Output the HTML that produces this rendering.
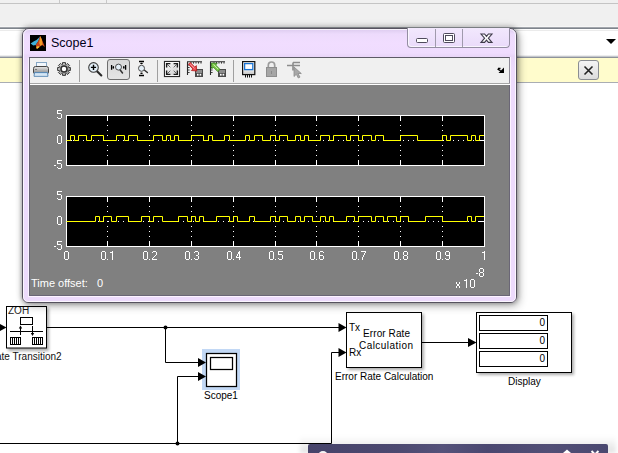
<!DOCTYPE html>
<html><head><meta charset="utf-8">
<style>
*{margin:0;padding:0;box-sizing:border-box}
html,body{width:618px;height:453px;overflow:hidden;background:#fff;font-family:"Liberation Sans",sans-serif}
.a{position:absolute}
.t{position:absolute;white-space:nowrap;color:#fff;font-size:12px;line-height:14px;will-change:transform}
.d{position:absolute;white-space:nowrap;color:#000;font-size:10px;line-height:12px}
</style></head><body>
<div class="a" style="left:0;top:0;width:618px;height:453px;overflow:hidden">
<!-- top chrome of simulink -->
<div class="a" style="left:0;top:0;width:618px;height:3px;background:#f0f0f0"></div>
<div class="a" style="left:59px;top:0;width:1px;height:3px;background:#c8c8c8"></div>
<div class="a" style="left:106px;top:0;width:1px;height:3px;background:#c8c8c8"></div>
<div class="a" style="left:0;top:3px;width:618px;height:1px;background:#c4c4c4"></div>
<div class="a" style="left:0;top:4px;width:618px;height:23px;background:#f0f0f0"></div>
<div class="a" style="left:0;top:26px;width:618px;height:1px;background:#f6f6f6"></div>
<div class="a" style="left:0;top:27px;width:618px;height:1px;background:#a2a6ac"></div>
<div class="a" style="left:0;top:28px;width:618px;height:1px;background:#7e848c"></div>
<div class="a" style="left:0;top:29px;width:618px;height:28px;background:#fff"></div>
<div class="a" style="left:0;top:30px;width:618px;height:1px;background:#ebebeb"></div>
<div class="a" style="left:0;top:55px;width:618px;height:1px;background:#ededed"></div><div class="a" style="left:0;top:56px;width:618px;height:1px;background:#c4c7cc"></div>
<div class="a" style="left:0;top:57px;width:618px;height:1px;background:#8e939b"></div>
<div class="a" style="left:0;top:58px;width:618px;height:24px;background:#fffccc"></div>
<div class="a" style="left:0;top:82px;width:618px;height:1px;background:#a9adb3"></div>
<!-- dropdown triangle -->
<svg class="a" style="left:601px;top:36px" width="16" height="10"><path d="M5 3h10l-5 5z" fill="#000"/></svg>
<!-- close button in yellow bar -->
<div class="a" style="left:578px;top:60px;width:21px;height:20px;border:1px solid #8a8d92;border-radius:3px;background:linear-gradient(#f4f4f4,#dcdcdc)"></div>
<svg class="a" style="left:578px;top:60px" width="21" height="20"><path d="M6.5 6.5l8 8M14.5 6.5l-8 8" stroke="#222" stroke-width="1.6"/></svg>

<!-- simulink diagram -->
<svg class="a" style="left:0;top:0" width="618" height="453">
 <defs>
  <filter id="sh" x="-20%" y="-20%" width="150%" height="150%"><feGaussianBlur stdDeviation="1.6"/></filter>
 </defs>
 <rect x="8" y="308" width="41" height="43" fill="#777" opacity="0.6" filter="url(#sh)"/>
 <rect x="348" y="314" width="76" height="56" fill="#777" opacity="0.6" filter="url(#sh)"/>
 <rect x="478" y="314" width="96" height="61" fill="#777" opacity="0.6" filter="url(#sh)"/>
 <rect x="6.5" y="306.5" width="40" height="41.5" fill="#fff" stroke="#000"/>
 <path d="M46 327.5H340" stroke="#000" fill="none"/>
 <path d="M165.5 327V362.5H199" stroke="#000" fill="none"/>
 <path d="M177.5 443.5V376.5H199" stroke="#000" fill="none"/>
 <path d="M0 443.5H331.5V352.5H340" stroke="#000" fill="none"/>
 <path d="M422 342.5H469" stroke="#000" fill="none"/>
 <circle cx="165.5" cy="327.5" r="2" fill="#000"/>
 <circle cx="177.5" cy="443.5" r="2" fill="#000"/>
 <rect x="202" y="349" width="38" height="41" fill="#c2d8f5"/>
 <rect x="206.5" y="353.5" width="30" height="33" fill="#fff" stroke="#000" stroke-width="1.25"/>
 <rect x="210.5" y="357.5" width="22" height="12" fill="#fff" stroke="#000" stroke-width="1.25"/>
 <rect x="346.5" y="312.5" width="75" height="55" fill="#fff" stroke="#000"/>
 <rect x="476.5" y="312.5" width="95" height="60" fill="#fff" stroke="#000"/>
 <rect x="479.5" y="315.5" width="68" height="15" fill="#fff" stroke="#000"/>
 <rect x="479.5" y="333.5" width="68" height="15" fill="#fff" stroke="#000"/>
 <rect x="479.5" y="351.5" width="68" height="15" fill="#fff" stroke="#000"/>
 <path d="M338.5 323L346.5 327.5L338.5 332z M338.5 348L346.5 352.5L338.5 357z M198 358L206 362.5L198 367z M198 372L206 376.5L198 381z M468 338L476.5 342.5L468 347z M-2 323L6.5 327.5L-2 332z" fill="#000"/>
 <rect x="20.5" y="317.5" width="12" height="7" fill="none" stroke="#000"/>
 <path d="M10 331.5H43 M20.5 327V335 M32.5 326V334" stroke="#000"/>
 <path d="M18.8 328.5L20.5 325.5L22.2 328.5z M30.8 333L32.5 336L34.2 333z" fill="#000"/>
 <rect x="10.5" y="337.5" width="10" height="7" fill="none" stroke="#000"/>
 <rect x="32.5" y="337.5" width="10" height="7" fill="none" stroke="#000"/>
 <path d="M12.5 338v6M14.5 338v6M16.5 338v6M18.5 338v6M34.5 338v6M36.5 338v6M38.5 338v6M40.5 338v6" stroke="#000"/>
</svg>
<div class="a" style="left:7px;top:307px;width:39px;height:10px;overflow:hidden"><div class="d" style="left:1px;top:-2px;color:#222">ZOH</div></div>
<div class="d" style="left:-4px;top:351px;color:#111">ate Transition2</div>
<div class="d" style="left:204px;top:390px">Scope1</div>
<div class="d" style="left:349px;top:322px">Tx</div>
<div class="d" style="left:349px;top:347px">Rx</div>
<div class="d" style="left:363px;top:328px;letter-spacing:0.1px">Error Rate</div><div class="d" style="left:359px;top:340px;letter-spacing:0.45px">Calculation</div>
<div class="d" style="left:335px;top:371px">Error Rate Calculation</div>
<div class="d" style="left:508px;top:376px">Display</div>
<div class="d" style="left:480px;top:317px;width:65px;text-align:right">0</div>
<div class="d" style="left:480px;top:335px;width:65px;text-align:right">0</div>
<div class="d" style="left:480px;top:353px;width:65px;text-align:right">0</div>

<!-- bottom dark window -->
<div class="a" style="left:300px;top:436px;width:316px;height:17px;background:linear-gradient(rgba(0,0,0,0),rgba(0,0,0,0.12));filter:blur(2px)"></div>
<div class="a" style="left:308px;top:444px;width:300px;height:9px;background:linear-gradient(90deg,#46436a 0%,#4c4970 30%,#55527a 45%,#4a4770 60%,#524f76 80%,#4a4870 100%);border-radius:2px 2px 0 0"></div>
<div class="a" style="left:318px;top:451px;width:10px;height:10px;border-radius:50%;background:#f4f4f4"></div>
<svg class="a" style="left:555px;top:444px" width="50" height="9"><path d="M8 9L12 5.5L16 9z" fill="#fff"/><path d="M36.5 7l7 7M43.5 7l-7 7" stroke="#fff" stroke-width="2"/></svg>

<!-- SCOPE WINDOW -->
<div class="a" style="left:22px;top:28px;width:495px;height:275px;border:1px solid #56525f;border-radius:7px 7px 6px 6px;background:linear-gradient(180deg,#dccbee 0px,#eddbfc 5px,#f1ddff 14px,#efdcfe 24px,#e9d6f8 27px,#eddbfc 40px,#eddbfc 100%);box-shadow:0 0 4px rgba(0,0,0,0.28),2px 3px 9px rgba(0,0,0,0.3),0 -2px 7px rgba(0,0,0,0.14)"></div>
<div class="a" style="left:23px;top:29px;width:493px;height:273px;border:1px solid rgba(255,255,255,0.75);border-radius:6px 6px 5px 5px"></div>
<!-- icon -->
<svg class="a" style="left:30px;top:35px" width="16" height="16" viewBox="0 0 16 16">
 <rect width="16" height="16" fill="#000"/>
 <path d="M0.6 8.6L4 6.3L6.5 5L8.9 2.8L10.3 1.1L8.5 6L5.7 10.1L3.3 10.6z" fill="#3fb0dc"/>
 <path d="M5.7 10.1L8 6.5L10.3 1.1L12.5 6L14.9 12L12 10.1L9.5 12L6.9 14L6.2 12z" fill="#c8461a"/>
 <path d="M10.3 1.1L11.8 4.5L12.6 9.6L10.4 11L9.2 8z" fill="#f29a26"/>
 <path d="M6.9 14L6.2 12L8.2 11L9.5 12z" fill="#f7c531"/>
</svg>
<div class="a" style="left:51px;top:35px;font-size:12.5px;color:#000018;line-height:16px;white-space:nowrap">Scope1</div>
<!-- caption buttons -->
<div class="a" style="left:407px;top:28px;width:103px;height:20px;border:1px solid #948ea2;border-top:none;border-radius:0 0 4px 4px;background:linear-gradient(#f2e8fd,#eadbfa);box-shadow:inset 1px -1px 0 rgba(255,255,255,0.7)"></div>
<div class="a" style="left:435px;top:29px;width:1px;height:18px;background:#a09aac"></div>
<div class="a" style="left:462px;top:29px;width:1px;height:18px;background:#a09aac"></div>
<svg class="a" style="left:408px;top:28px" width="102" height="20">
 <rect x="8.5" y="10.5" width="11" height="4" rx="1" fill="#fff" stroke="#4f4b5c"/>
 <rect x="35.5" y="5.5" width="11" height="9" rx="1" fill="#fff" stroke="#4f4b5c"/>
 <rect x="37.5" y="7.5" width="7" height="5" fill="#fff" stroke="#4f4b5c"/>
 <path d="M73 6h3.6l1.9 2.3l1.9-2.3h3.6l-3.6 4.2l3.6 4.2h-3.6l-1.9-2.3l-1.9 2.3h-3.6l3.6-4.2z" fill="#fafafa" stroke="#3e3a4a" stroke-width="1.1"/>
</svg>

<!-- toolbar -->
<div class="a" style="left:29px;top:57px;width:481px;height:28px;background:#f0f0f0;border-top:1px solid #5d5a66;border-left:1px solid #6a6676;border-right:1px solid #8e8a98"></div>
<div class="a" style="left:30px;top:83px;width:480px;height:1px;background:#a6a6a6"></div>
<div class="a" style="left:30px;top:84px;width:480px;height:1px;background:#fff"></div>
<div class="a" style="left:28px;top:58px;width:1px;height:238px;background:rgba(255,255,255,0.6)"></div>
<div class="a" style="left:79px;top:60px;width:1px;height:22px;background:#a0a0a0"></div>
<div class="a" style="left:157px;top:60px;width:1px;height:22px;background:#a0a0a0"></div>
<div class="a" style="left:233px;top:60px;width:1px;height:22px;background:#a0a0a0"></div>
<div class="a" style="left:107px;top:59px;width:23px;height:21px;border:1px solid #6e6e6e;border-radius:3px;background:linear-gradient(#d8d8d8,#e4e4e4)"></div>
<svg class="a" style="left:29px;top:57px" width="481" height="28">
 <defs>
  <linearGradient id="gbody" x1="0" y1="0" x2="0" y2="1"><stop offset="0" stop-color="#e8e8e8"/><stop offset="0.5" stop-color="#b4b4b4"/><stop offset="1" stop-color="#8a8a8a"/></linearGradient>
  <linearGradient id="gtray" x1="0" y1="0" x2="0" y2="1"><stop offset="0" stop-color="#b8d4ec"/><stop offset="1" stop-color="#eef5fb"/></linearGradient>
  <linearGradient id="gbox" x1="0" y1="0" x2="1" y2="1"><stop offset="0" stop-color="#fff"/><stop offset="1" stop-color="#c8c8c8"/></linearGradient>
  <linearGradient id="ggear" x1="0" y1="0" x2="1" y2="1"><stop offset="0" stop-color="#d0d0d0"/><stop offset="1" stop-color="#8c8c8c"/></linearGradient>
 </defs>
 <!-- printer -->
 <rect x="7.5" y="5.5" width="10" height="5" fill="#f2f7fc" stroke="#86a6c4"/>
 <rect x="4.5" y="9.5" width="15" height="7.5" rx="2" fill="url(#gbody)" stroke="#454545"/>
 <path d="M6.5 12.5h1" stroke="#333"/>
 <path d="M5.5 15.5h13l0.5 3.8h-14z" fill="url(#gtray)" stroke="#5b8ab5"/>
 <!-- gear -->
 <g transform="translate(35,12)">
  <path d="M-1.50 -4.66 L-1.50 -6.40 L1.50 -6.40 L1.50 -4.66 L2.24 -4.36 L3.46 -5.59 L5.59 -3.46 L4.36 -2.24 L4.66 -1.50 L6.40 -1.50 L6.40 1.50 L4.66 1.50 L4.36 2.24 L5.59 3.46 L3.46 5.59 L2.24 4.36 L1.50 4.66 L1.50 6.40 L-1.50 6.40 L-1.50 4.66 L-2.24 4.36 L-3.46 5.59 L-5.59 3.46 L-4.36 2.24 L-4.66 1.50 L-6.40 1.50 L-6.40 -1.50 L-4.66 -1.50 L-4.36 -2.24 L-5.59 -3.46 L-3.46 -5.59 L-2.24 -4.36z" fill="url(#ggear)" stroke="#3a3a3a" stroke-width="1"/>
  <circle r="3" fill="#fff" stroke="#2e2e2e" stroke-width="1.5"/>
  
 </g>
 <!-- zoom in -->
 <path d="M68.3 14.5L72.3 18.5" stroke="#2a2a2a" stroke-width="2.1" stroke-linecap="round"/>
 <circle cx="64.5" cy="10.4" r="4.8" fill="#e2eef7" stroke="#3a3a3a" stroke-width="1.05"/>
 <path d="M61.9 10.4h5.2M64.5 7.8v5.2" stroke="#000" stroke-width="1.4"/>
 <!-- zoom x -->
 <path d="M82.6 8v4.8 M96.6 8v4.8" stroke="#000" stroke-width="1.3"/>
 <ellipse cx="84.3" cy="10.4" rx="0.75" ry="1.3" fill="#000"/>
 <ellipse cx="94.8" cy="10.4" rx="0.75" ry="1.3" fill="#000"/>
 <path d="M91 12.8L93.5 16" stroke="#333" stroke-width="1.5" stroke-linecap="round"/>
 <circle cx="89.5" cy="10.1" r="3" fill="#e4eff8" stroke="#4a4a4a" stroke-width="1"/>
 <!-- zoom y -->
 <path d="M110 4.5h5 M110 18.5h5" stroke="#000" stroke-width="1.3"/>
 <ellipse cx="112.5" cy="6.4" rx="1.3" ry="0.75" fill="#000"/>
 <ellipse cx="112.5" cy="16.3" rx="1.3" ry="0.75" fill="#000"/>
 <path d="M115.2 13L118.4 15.5" stroke="#333" stroke-width="1.5" stroke-linecap="round"/>
 <circle cx="112.5" cy="11.3" r="3" fill="#e4eff8" stroke="#4a4a4a" stroke-width="1"/>
 <!-- autoscale -->
 <g transform="translate(135,4)">
  <rect x="0.5" y="0.5" width="15" height="15" fill="url(#gbox)" stroke="#2a2a2a" stroke-width="1.2"/>
  <rect x="1.5" y="1.5" width="13" height="13" fill="none" stroke="#fff" stroke-width="0.8"/>
  <path d="M2.6 6.4V2.6H6.4 M13.4 6.4V2.6H9.6 M2.6 9.6V13.4H6.4 M13.4 9.6V13.4H9.6" stroke="#1a1a1a" stroke-width="1.4" fill="none"/>
  <path d="M3 3l3.3 3.3 M13 3l-3.3 3.3 M3 13l3.3-3.3 M13 13l-3.3-3.3" stroke="#444" stroke-width="0.8"/>
 </g>
 <!-- save axes limits -->
 <g transform="translate(158,4)">
  <path d="M0.5 1V14 M0 0.8H15" stroke="#2a2a2a" stroke-width="1.1"/>
  <path d="M4 1v1.6 M6.5 1v1.6 M9 1v1.6 M11.5 1v1.6 M14 1v1.6 M1 4h1.6 M1 6.5h1.6 M1 9h1.6 M1 11.5h1.6" stroke="#2a2a2a" stroke-width="0.9"/>
  <rect x="8.5" y="8.5" width="7" height="7" fill="#8c8c8c" stroke="#4a4a4a"/>
  <rect x="9" y="12" width="6" height="3" fill="#4a4a4a"/>
  <rect x="10" y="12.8" width="1.6" height="1.8" fill="#fff"/><rect x="12.6" y="12.8" width="1.6" height="1.8" fill="#fff"/>
  <path d="M1.5 3.2L3.2 1.5L7.8 6.1L9.3 4.6L9.8 10L4.4 9.5L5.9 8z" fill="#ec4a50" stroke="#b01818" stroke-width="0.8"/>
  <path d="M3.2 3L7.5 7.3" stroke="#f8b0b4" stroke-width="1"/>
 </g>
 <!-- restore axes limits -->
 <g transform="translate(181,4)">
  <path d="M0.5 1V14 M0 0.8H15" stroke="#2a2a2a" stroke-width="1.1"/>
  <path d="M4 1v1.6 M6.5 1v1.6 M9 1v1.6 M11.5 1v1.6 M14 1v1.6 M1 4h1.6 M1 6.5h1.6 M1 9h1.6 M1 11.5h1.6" stroke="#2a2a2a" stroke-width="0.9"/>
  <rect x="8.5" y="8.5" width="7" height="7" fill="#8c8c8c" stroke="#4a4a4a"/>
  <rect x="9" y="12" width="6" height="3" fill="#4a4a4a"/>
  <rect x="10" y="12.8" width="1.6" height="1.8" fill="#fff"/><rect x="12.6" y="12.8" width="1.6" height="1.8" fill="#fff"/>
  <path d="M1.5 2L7.2 2.4L5.6 4L10 8.4L7.8 10.6L3.4 6.2L1.9 7.7z" fill="#7cc84a" stroke="#2f7d12" stroke-width="0.8"/>
  <path d="M3.5 3.5L8 8" stroke="#c8f0a0" stroke-width="1"/>
 </g>
 <!-- scope params -->
 <g transform="translate(213,4)">
  <defs><linearGradient id="gsp" x1="0" y1="0" x2="0" y2="1"><stop offset="0.5" stop-color="#fafafa"/><stop offset="1" stop-color="#c4c4c4"/></linearGradient></defs>
  <rect x="0.6" y="0.6" width="12.2" height="13" fill="url(#gsp)" stroke="#111" stroke-width="1.2"/>
  <rect x="2.6" y="2.6" width="8.2" height="6" fill="#fff" stroke="#1a74d4" stroke-width="1.3"/>
  <path d="M3.5 14v2.5M5.5 14v2.5M7.5 14v2.5M9.5 14v2.5" stroke="#111"/>
 </g>
 <!-- lock -->
 <g transform="translate(237,4)">
  <path d="M2.3 6.5V4.2a3.2 3.2 0 0 1 6.4 0V6.5" fill="none" stroke="#9c9c9c" stroke-width="1.7"/>
  <rect x="0.5" y="6.5" width="10" height="9" fill="#a6a6a6" stroke="#8e8e8e"/>
  <path d="M5.5 10v3" stroke="#8a8a8a"/>
 </g>
 <!-- cursor -->
 <g transform="translate(258,4)">
  <path d="M0 4.5h9 M6 1.5h7 M6 1.5v8 M9 4.5h4" stroke="#8c8c8c" stroke-width="1.6"/>
  <path d="M7 6v9.5l2.3-2.2l2 3.7l1.7-0.9l-2-3.6h3.3z" fill="#a8a8a8" stroke="#8a8a8a" stroke-width="0.8"/>
 </g>
 <!-- expand arrow -->
 <path d="M475 10.5V16H469.5z" fill="#000"/><path d="M468.5 12L474 15.5M469 11.5h2.5" stroke="#000" stroke-width="1.3" fill="none"/>
</svg>

<!-- plot area -->
<div class="a" style="left:29px;top:85px;width:481px;height:211px;background:#808080;border-left:1px solid #6a6676;border-bottom:1px solid #6a6676;border-right:1px solid #6a6676"></div><div class="a" style="left:510px;top:57px;width:1px;height:239px;background:rgba(255,250,255,0.8)"></div><div class="a" style="left:28px;top:296px;width:483px;height:1px;background:rgba(255,250,255,0.8)"></div>
<svg class="a" style="left:0;top:0" width="618" height="453">
<rect x="66" y="115" width="419" height="51" fill="#fff"/>
<rect x="67" y="116" width="417" height="49" fill="#000"/>
<path d="M68 140h1v1h-1z M73 140h1v1h-1z M78 140h1v1h-1z M83 140h1v1h-1z M88 140h1v1h-1z M93 140h1v1h-1z M98 140h1v1h-1z M103 140h1v1h-1z M108 140h1v1h-1z M113 140h1v1h-1z M118 140h1v1h-1z M123 140h1v1h-1z M128 140h1v1h-1z M133 140h1v1h-1z M138 140h1v1h-1z M143 140h1v1h-1z M148 140h1v1h-1z M153 140h1v1h-1z M158 140h1v1h-1z M163 140h1v1h-1z M168 140h1v1h-1z M173 140h1v1h-1z M178 140h1v1h-1z M183 140h1v1h-1z M188 140h1v1h-1z M193 140h1v1h-1z M198 140h1v1h-1z M203 140h1v1h-1z M208 140h1v1h-1z M213 140h1v1h-1z M218 140h1v1h-1z M223 140h1v1h-1z M228 140h1v1h-1z M233 140h1v1h-1z M238 140h1v1h-1z M243 140h1v1h-1z M248 140h1v1h-1z M253 140h1v1h-1z M258 140h1v1h-1z M263 140h1v1h-1z M268 140h1v1h-1z M273 140h1v1h-1z M278 140h1v1h-1z M283 140h1v1h-1z M288 140h1v1h-1z M293 140h1v1h-1z M298 140h1v1h-1z M303 140h1v1h-1z M308 140h1v1h-1z M313 140h1v1h-1z M318 140h1v1h-1z M323 140h1v1h-1z M328 140h1v1h-1z M333 140h1v1h-1z M338 140h1v1h-1z M343 140h1v1h-1z M348 140h1v1h-1z M353 140h1v1h-1z M358 140h1v1h-1z M363 140h1v1h-1z M368 140h1v1h-1z M373 140h1v1h-1z M378 140h1v1h-1z M383 140h1v1h-1z M388 140h1v1h-1z M393 140h1v1h-1z M398 140h1v1h-1z M403 140h1v1h-1z M408 140h1v1h-1z M413 140h1v1h-1z M418 140h1v1h-1z M423 140h1v1h-1z M428 140h1v1h-1z M433 140h1v1h-1z M438 140h1v1h-1z M443 140h1v1h-1z M448 140h1v1h-1z M453 140h1v1h-1z M458 140h1v1h-1z M463 140h1v1h-1z M468 140h1v1h-1z M473 140h1v1h-1z M478 140h1v1h-1z M67 140h5v1h-5z M479 140h5v1h-5z M107 116h1v5h-1z M107 160h1v5h-1z M107 125h1v1h-1z M107 130h1v1h-1z M107 135h1v1h-1z M107 140h1v1h-1z M107 145h1v1h-1z M107 150h1v1h-1z M107 155h1v1h-1z M149 116h1v5h-1z M149 160h1v5h-1z M149 125h1v1h-1z M149 130h1v1h-1z M149 135h1v1h-1z M149 140h1v1h-1z M149 145h1v1h-1z M149 150h1v1h-1z M149 155h1v1h-1z M191 116h1v5h-1z M191 160h1v5h-1z M191 125h1v1h-1z M191 130h1v1h-1z M191 135h1v1h-1z M191 140h1v1h-1z M191 145h1v1h-1z M191 150h1v1h-1z M191 155h1v1h-1z M233 116h1v5h-1z M233 160h1v5h-1z M233 125h1v1h-1z M233 130h1v1h-1z M233 135h1v1h-1z M233 140h1v1h-1z M233 145h1v1h-1z M233 150h1v1h-1z M233 155h1v1h-1z M275 116h1v5h-1z M275 160h1v5h-1z M275 125h1v1h-1z M275 130h1v1h-1z M275 135h1v1h-1z M275 140h1v1h-1z M275 145h1v1h-1z M275 150h1v1h-1z M275 155h1v1h-1z M316 116h1v5h-1z M316 160h1v5h-1z M316 125h1v1h-1z M316 130h1v1h-1z M316 135h1v1h-1z M316 140h1v1h-1z M316 145h1v1h-1z M316 150h1v1h-1z M316 155h1v1h-1z M358 116h1v5h-1z M358 160h1v5h-1z M358 125h1v1h-1z M358 130h1v1h-1z M358 135h1v1h-1z M358 140h1v1h-1z M358 145h1v1h-1z M358 150h1v1h-1z M358 155h1v1h-1z M400 116h1v5h-1z M400 160h1v5h-1z M400 125h1v1h-1z M400 130h1v1h-1z M400 135h1v1h-1z M400 140h1v1h-1z M400 145h1v1h-1z M400 150h1v1h-1z M400 155h1v1h-1z M442 116h1v5h-1z M442 160h1v5h-1z M442 125h1v1h-1z M442 130h1v1h-1z M442 135h1v1h-1z M442 140h1v1h-1z M442 145h1v1h-1z M442 150h1v1h-1z M442 155h1v1h-1z" fill="#fff"/>
<path d="M66.5 140.5 H70.5 V135.5 H74.5 V140.5 H78.5 V135.5 H86.5 V140.5 H91.5 V135.5 H103.5 V140.5 H116.5 V135.5 H124.5 V140.5 H128.5 V135.5 H137.5 V140.5 H153.5 V135.5 H162.5 V140.5 H166.5 V135.5 H170.5 V140.5 H174.5 V135.5 H178.5 V140.5 H191.5 V135.5 H203.5 V140.5 H208.5 V135.5 H212.5 V140.5 H224.5 V135.5 H229.5 V140.5 H245.5 V135.5 H249.5 V140.5 H254.5 V135.5 H262.5 V140.5 H270.5 V135.5 H275.5 V140.5 H279.5 V135.5 H287.5 V140.5 H295.5 V135.5 H300.5 V140.5 H304.5 V135.5 H308.5 V140.5 H320.5 V135.5 H329.5 V140.5 H333.5 V135.5 H346.5 V140.5 H350.5 V135.5 H358.5 V140.5 H362.5 V135.5 H371.5 V140.5 H375.5 V135.5 H383.5 V140.5 H400.5 V135.5 H417.5 V140.5 H442.5 V135.5 H446.5 V140.5 H450.5 V135.5 H467.5 V140.5 H471.5 V135.5 H475.5 V140.5 H479.5 V135.5 H484" fill="none" stroke="#ff0" stroke-width="1"/>
<rect x="66" y="196" width="419" height="51" fill="#fff"/>
<rect x="67" y="197" width="417" height="49" fill="#000"/>
<path d="M68 221h1v1h-1z M73 221h1v1h-1z M78 221h1v1h-1z M83 221h1v1h-1z M88 221h1v1h-1z M93 221h1v1h-1z M98 221h1v1h-1z M103 221h1v1h-1z M108 221h1v1h-1z M113 221h1v1h-1z M118 221h1v1h-1z M123 221h1v1h-1z M128 221h1v1h-1z M133 221h1v1h-1z M138 221h1v1h-1z M143 221h1v1h-1z M148 221h1v1h-1z M153 221h1v1h-1z M158 221h1v1h-1z M163 221h1v1h-1z M168 221h1v1h-1z M173 221h1v1h-1z M178 221h1v1h-1z M183 221h1v1h-1z M188 221h1v1h-1z M193 221h1v1h-1z M198 221h1v1h-1z M203 221h1v1h-1z M208 221h1v1h-1z M213 221h1v1h-1z M218 221h1v1h-1z M223 221h1v1h-1z M228 221h1v1h-1z M233 221h1v1h-1z M238 221h1v1h-1z M243 221h1v1h-1z M248 221h1v1h-1z M253 221h1v1h-1z M258 221h1v1h-1z M263 221h1v1h-1z M268 221h1v1h-1z M273 221h1v1h-1z M278 221h1v1h-1z M283 221h1v1h-1z M288 221h1v1h-1z M293 221h1v1h-1z M298 221h1v1h-1z M303 221h1v1h-1z M308 221h1v1h-1z M313 221h1v1h-1z M318 221h1v1h-1z M323 221h1v1h-1z M328 221h1v1h-1z M333 221h1v1h-1z M338 221h1v1h-1z M343 221h1v1h-1z M348 221h1v1h-1z M353 221h1v1h-1z M358 221h1v1h-1z M363 221h1v1h-1z M368 221h1v1h-1z M373 221h1v1h-1z M378 221h1v1h-1z M383 221h1v1h-1z M388 221h1v1h-1z M393 221h1v1h-1z M398 221h1v1h-1z M403 221h1v1h-1z M408 221h1v1h-1z M413 221h1v1h-1z M418 221h1v1h-1z M423 221h1v1h-1z M428 221h1v1h-1z M433 221h1v1h-1z M438 221h1v1h-1z M443 221h1v1h-1z M448 221h1v1h-1z M453 221h1v1h-1z M458 221h1v1h-1z M463 221h1v1h-1z M468 221h1v1h-1z M473 221h1v1h-1z M478 221h1v1h-1z M67 221h5v1h-5z M479 221h5v1h-5z M107 197h1v5h-1z M107 241h1v5h-1z M107 206h1v1h-1z M107 211h1v1h-1z M107 216h1v1h-1z M107 221h1v1h-1z M107 226h1v1h-1z M107 231h1v1h-1z M107 236h1v1h-1z M149 197h1v5h-1z M149 241h1v5h-1z M149 206h1v1h-1z M149 211h1v1h-1z M149 216h1v1h-1z M149 221h1v1h-1z M149 226h1v1h-1z M149 231h1v1h-1z M149 236h1v1h-1z M191 197h1v5h-1z M191 241h1v5h-1z M191 206h1v1h-1z M191 211h1v1h-1z M191 216h1v1h-1z M191 221h1v1h-1z M191 226h1v1h-1z M191 231h1v1h-1z M191 236h1v1h-1z M233 197h1v5h-1z M233 241h1v5h-1z M233 206h1v1h-1z M233 211h1v1h-1z M233 216h1v1h-1z M233 221h1v1h-1z M233 226h1v1h-1z M233 231h1v1h-1z M233 236h1v1h-1z M275 197h1v5h-1z M275 241h1v5h-1z M275 206h1v1h-1z M275 211h1v1h-1z M275 216h1v1h-1z M275 221h1v1h-1z M275 226h1v1h-1z M275 231h1v1h-1z M275 236h1v1h-1z M316 197h1v5h-1z M316 241h1v5h-1z M316 206h1v1h-1z M316 211h1v1h-1z M316 216h1v1h-1z M316 221h1v1h-1z M316 226h1v1h-1z M316 231h1v1h-1z M316 236h1v1h-1z M358 197h1v5h-1z M358 241h1v5h-1z M358 206h1v1h-1z M358 211h1v1h-1z M358 216h1v1h-1z M358 221h1v1h-1z M358 226h1v1h-1z M358 231h1v1h-1z M358 236h1v1h-1z M400 197h1v5h-1z M400 241h1v5h-1z M400 206h1v1h-1z M400 211h1v1h-1z M400 216h1v1h-1z M400 221h1v1h-1z M400 226h1v1h-1z M400 231h1v1h-1z M400 236h1v1h-1z M442 197h1v5h-1z M442 241h1v5h-1z M442 206h1v1h-1z M442 211h1v1h-1z M442 216h1v1h-1z M442 221h1v1h-1z M442 226h1v1h-1z M442 231h1v1h-1z M442 236h1v1h-1z" fill="#fff"/>
<path d="M66.5 221.5 H95.5 V216.5 H99.5 V221.5 H103.5 V216.5 H111.5 V221.5 H116.5 V216.5 H128.5 V221.5 H141.5 V216.5 H149.5 V221.5 H153.5 V216.5 H162.5 V221.5 H178.5 V216.5 H187.5 V221.5 H191.5 V216.5 H195.5 V221.5 H199.5 V216.5 H203.5 V221.5 H216.5 V216.5 H229.5 V221.5 H233.5 V216.5 H237.5 V221.5 H249.5 V216.5 H254.5 V221.5 H270.5 V216.5 H275.5 V221.5 H279.5 V216.5 H287.5 V221.5 H295.5 V216.5 H300.5 V221.5 H304.5 V216.5 H312.5 V221.5 H320.5 V216.5 H325.5 V221.5 H329.5 V216.5 H333.5 V221.5 H346.5 V216.5 H354.5 V221.5 H358.5 V216.5 H371.5 V221.5 H375.5 V216.5 H383.5 V221.5 H387.5 V216.5 H396.5 V221.5 H400.5 V216.5 H408.5 V221.5 H425.5 V216.5 H442.5 V221.5 H467.5 V216.5 H471.5 V221.5 H475.5 V216.5 H484" fill="none" stroke="#ff0" stroke-width="1"/>
</svg>
<svg class="a" style="left:0;top:0" width="618" height="453" shape-rendering="crispEdges"><path d="M65 251h3v1h-3z M64 252h1v1h-1z M68 252h1v1h-1z M64 253h1v1h-1z M68 253h1v1h-1z M64 254h1v1h-1z M68 254h1v1h-1z M64 255h1v1h-1z M68 255h1v1h-1z M64 256h1v1h-1z M68 256h1v1h-1z M64 257h1v1h-1z M68 257h1v1h-1z M64 258h1v1h-1z M68 258h1v1h-1z M65 259h3v1h-3z M102 251h3v1h-3z M101 252h1v1h-1z M105 252h1v1h-1z M101 253h1v1h-1z M105 253h1v1h-1z M101 254h1v1h-1z M105 254h1v1h-1z M101 255h1v1h-1z M105 255h1v1h-1z M101 256h1v1h-1z M105 256h1v1h-1z M101 257h1v1h-1z M105 257h1v1h-1z M101 258h1v1h-1z M105 258h1v1h-1z M102 259h3v1h-3z M107 259h1v1h-1z M112 251h1v1h-1z M110 252h3v1h-3z M112 253h1v1h-1z M112 254h1v1h-1z M112 255h1v1h-1z M112 256h1v1h-1z M112 257h1v1h-1z M112 258h1v1h-1z M112 259h1v1h-1z M144 251h3v1h-3z M143 252h1v1h-1z M147 252h1v1h-1z M143 253h1v1h-1z M147 253h1v1h-1z M143 254h1v1h-1z M147 254h1v1h-1z M143 255h1v1h-1z M147 255h1v1h-1z M143 256h1v1h-1z M147 256h1v1h-1z M143 257h1v1h-1z M147 257h1v1h-1z M143 258h1v1h-1z M147 258h1v1h-1z M144 259h3v1h-3z M149 259h1v1h-1z M153 251h3v1h-3z M152 252h1v1h-1z M156 252h1v1h-1z M156 253h1v1h-1z M156 254h1v1h-1z M155 255h1v1h-1z M154 256h1v1h-1z M153 257h1v1h-1z M152 258h1v1h-1z M152 259h5v1h-5z M186 251h3v1h-3z M185 252h1v1h-1z M189 252h1v1h-1z M185 253h1v1h-1z M189 253h1v1h-1z M185 254h1v1h-1z M189 254h1v1h-1z M185 255h1v1h-1z M189 255h1v1h-1z M185 256h1v1h-1z M189 256h1v1h-1z M185 257h1v1h-1z M189 257h1v1h-1z M185 258h1v1h-1z M189 258h1v1h-1z M186 259h3v1h-3z M191 259h1v1h-1z M195 251h3v1h-3z M194 252h1v1h-1z M198 252h1v1h-1z M198 253h1v1h-1z M198 254h1v1h-1z M196 255h2v1h-2z M198 256h1v1h-1z M198 257h1v1h-1z M194 258h1v1h-1z M198 258h1v1h-1z M195 259h3v1h-3z M228 251h3v1h-3z M227 252h1v1h-1z M231 252h1v1h-1z M227 253h1v1h-1z M231 253h1v1h-1z M227 254h1v1h-1z M231 254h1v1h-1z M227 255h1v1h-1z M231 255h1v1h-1z M227 256h1v1h-1z M231 256h1v1h-1z M227 257h1v1h-1z M231 257h1v1h-1z M227 258h1v1h-1z M231 258h1v1h-1z M228 259h3v1h-3z M233 259h1v1h-1z M239 251h1v1h-1z M238 252h2v1h-2z M238 253h2v1h-2z M237 254h1v1h-1z M239 254h1v1h-1z M237 255h1v1h-1z M239 255h1v1h-1z M236 256h1v1h-1z M239 256h1v1h-1z M236 257h5v1h-5z M239 258h1v1h-1z M239 259h1v1h-1z M270 251h3v1h-3z M269 252h1v1h-1z M273 252h1v1h-1z M269 253h1v1h-1z M273 253h1v1h-1z M269 254h1v1h-1z M273 254h1v1h-1z M269 255h1v1h-1z M273 255h1v1h-1z M269 256h1v1h-1z M273 256h1v1h-1z M269 257h1v1h-1z M273 257h1v1h-1z M269 258h1v1h-1z M273 258h1v1h-1z M270 259h3v1h-3z M275 259h1v1h-1z M278 251h5v1h-5z M278 252h1v1h-1z M278 253h1v1h-1z M278 254h4v1h-4z M282 255h1v1h-1z M282 256h1v1h-1z M282 257h1v1h-1z M278 258h1v1h-1z M282 258h1v1h-1z M279 259h3v1h-3z M311 251h3v1h-3z M310 252h1v1h-1z M314 252h1v1h-1z M310 253h1v1h-1z M314 253h1v1h-1z M310 254h1v1h-1z M314 254h1v1h-1z M310 255h1v1h-1z M314 255h1v1h-1z M310 256h1v1h-1z M314 256h1v1h-1z M310 257h1v1h-1z M314 257h1v1h-1z M310 258h1v1h-1z M314 258h1v1h-1z M311 259h3v1h-3z M316 259h1v1h-1z M320 251h3v1h-3z M319 252h1v1h-1z M323 252h1v1h-1z M319 253h1v1h-1z M319 254h1v1h-1z M319 255h4v1h-4z M319 256h1v1h-1z M323 256h1v1h-1z M319 257h1v1h-1z M323 257h1v1h-1z M319 258h1v1h-1z M323 258h1v1h-1z M320 259h3v1h-3z M353 251h3v1h-3z M352 252h1v1h-1z M356 252h1v1h-1z M352 253h1v1h-1z M356 253h1v1h-1z M352 254h1v1h-1z M356 254h1v1h-1z M352 255h1v1h-1z M356 255h1v1h-1z M352 256h1v1h-1z M356 256h1v1h-1z M352 257h1v1h-1z M356 257h1v1h-1z M352 258h1v1h-1z M356 258h1v1h-1z M353 259h3v1h-3z M358 259h1v1h-1z M361 251h5v1h-5z M365 252h1v1h-1z M364 253h1v1h-1z M364 254h1v1h-1z M363 255h1v1h-1z M363 256h1v1h-1z M362 257h1v1h-1z M362 258h1v1h-1z M362 259h1v1h-1z M395 251h3v1h-3z M394 252h1v1h-1z M398 252h1v1h-1z M394 253h1v1h-1z M398 253h1v1h-1z M394 254h1v1h-1z M398 254h1v1h-1z M394 255h1v1h-1z M398 255h1v1h-1z M394 256h1v1h-1z M398 256h1v1h-1z M394 257h1v1h-1z M398 257h1v1h-1z M394 258h1v1h-1z M398 258h1v1h-1z M395 259h3v1h-3z M400 259h1v1h-1z M404 251h3v1h-3z M403 252h1v1h-1z M407 252h1v1h-1z M403 253h1v1h-1z M407 253h1v1h-1z M403 254h1v1h-1z M407 254h1v1h-1z M404 255h3v1h-3z M403 256h1v1h-1z M407 256h1v1h-1z M403 257h1v1h-1z M407 257h1v1h-1z M403 258h1v1h-1z M407 258h1v1h-1z M404 259h3v1h-3z M437 251h3v1h-3z M436 252h1v1h-1z M440 252h1v1h-1z M436 253h1v1h-1z M440 253h1v1h-1z M436 254h1v1h-1z M440 254h1v1h-1z M436 255h1v1h-1z M440 255h1v1h-1z M436 256h1v1h-1z M440 256h1v1h-1z M436 257h1v1h-1z M440 257h1v1h-1z M436 258h1v1h-1z M440 258h1v1h-1z M437 259h3v1h-3z M442 259h1v1h-1z M446 251h3v1h-3z M445 252h1v1h-1z M449 252h1v1h-1z M445 253h1v1h-1z M449 253h1v1h-1z M445 254h1v1h-1z M449 254h1v1h-1z M446 255h4v1h-4z M449 256h1v1h-1z M449 257h1v1h-1z M445 258h1v1h-1z M449 258h1v1h-1z M446 259h3v1h-3z M484 251h1v1h-1z M482 252h3v1h-3z M484 253h1v1h-1z M484 254h1v1h-1z M484 255h1v1h-1z M484 256h1v1h-1z M484 257h1v1h-1z M484 258h1v1h-1z M484 259h1v1h-1z M57 110h5v1h-5z M57 111h1v1h-1z M57 112h1v1h-1z M57 113h4v1h-4z M61 114h1v1h-1z M61 115h1v1h-1z M61 116h1v1h-1z M57 117h1v1h-1z M61 117h1v1h-1z M58 118h3v1h-3z M58 135h3v1h-3z M57 136h1v1h-1z M61 136h1v1h-1z M57 137h1v1h-1z M61 137h1v1h-1z M57 138h1v1h-1z M61 138h1v1h-1z M57 139h1v1h-1z M61 139h1v1h-1z M57 140h1v1h-1z M61 140h1v1h-1z M57 141h1v1h-1z M61 141h1v1h-1z M57 142h1v1h-1z M61 142h1v1h-1z M58 143h3v1h-3z M54 165h2v1h-2z M57 160h5v1h-5z M57 161h1v1h-1z M57 162h1v1h-1z M57 163h4v1h-4z M61 164h1v1h-1z M61 165h1v1h-1z M61 166h1v1h-1z M57 167h1v1h-1z M61 167h1v1h-1z M58 168h3v1h-3z M57 191h5v1h-5z M57 192h1v1h-1z M57 193h1v1h-1z M57 194h4v1h-4z M61 195h1v1h-1z M61 196h1v1h-1z M61 197h1v1h-1z M57 198h1v1h-1z M61 198h1v1h-1z M58 199h3v1h-3z M58 216h3v1h-3z M57 217h1v1h-1z M61 217h1v1h-1z M57 218h1v1h-1z M61 218h1v1h-1z M57 219h1v1h-1z M61 219h1v1h-1z M57 220h1v1h-1z M61 220h1v1h-1z M57 221h1v1h-1z M61 221h1v1h-1z M57 222h1v1h-1z M61 222h1v1h-1z M57 223h1v1h-1z M61 223h1v1h-1z M58 224h3v1h-3z M54 246h2v1h-2z M57 241h5v1h-5z M57 242h1v1h-1z M57 243h1v1h-1z M57 244h4v1h-4z M61 245h1v1h-1z M61 246h1v1h-1z M61 247h1v1h-1z M57 248h1v1h-1z M61 248h1v1h-1z M58 249h3v1h-3z M456 282h1v1h-1z M459 282h1v1h-1z M456 283h1v1h-1z M459 283h1v1h-1z M457 284h2v1h-2z M457 285h2v1h-2z M456 286h1v1h-1z M459 286h1v1h-1z M456 287h1v1h-1z M459 287h1v1h-1z M466 279h1v1h-1z M464 280h3v1h-3z M466 281h1v1h-1z M466 282h1v1h-1z M466 283h1v1h-1z M466 284h1v1h-1z M466 285h1v1h-1z M466 286h1v1h-1z M466 287h1v1h-1z M471 279h3v1h-3z M470 280h1v1h-1z M474 280h1v1h-1z M470 281h1v1h-1z M474 281h1v1h-1z M470 282h1v1h-1z M474 282h1v1h-1z M470 283h1v1h-1z M474 283h1v1h-1z M470 284h1v1h-1z M474 284h1v1h-1z M470 285h1v1h-1z M474 285h1v1h-1z M470 286h1v1h-1z M474 286h1v1h-1z M471 287h3v1h-3z M476 273h2v1h-2z M480 268h3v1h-3z M479 269h1v1h-1z M483 269h1v1h-1z M479 270h1v1h-1z M483 270h1v1h-1z M479 271h1v1h-1z M483 271h1v1h-1z M480 272h3v1h-3z M479 273h1v1h-1z M483 273h1v1h-1z M479 274h1v1h-1z M483 274h1v1h-1z M479 275h1v1h-1z M483 275h1v1h-1z M480 276h3v1h-3z" fill="#fff"/></svg>
<div class="a" style="left:31px;top:277px;font-size:11px;color:#fff;line-height:13px;white-space:nowrap">Time offset:</div>
<div class="a" style="left:97px;top:277px;font-size:11px;color:#fff;line-height:13px">0</div>


</div>
</body></html>
